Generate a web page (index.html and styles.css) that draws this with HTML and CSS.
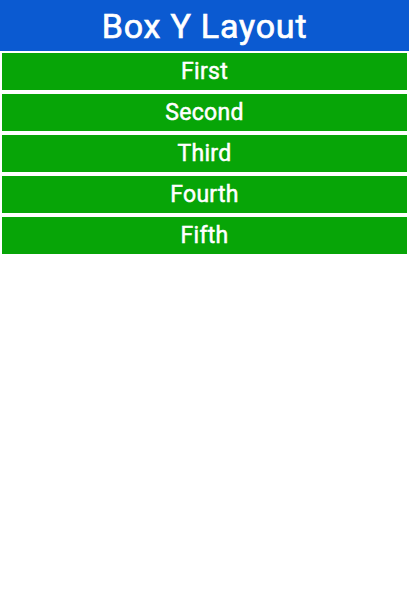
FILE: index.html
```html
<!DOCTYPE html>
<html>
<head>
<meta charset="utf-8">
<link rel="stylesheet" href="styles.css">
</head>
<body>
<div class="header">Box Y Layout</div>
<div class="list">
  <div class="item">First</div>
  <div class="item">Second</div>
  <div class="item">Third</div>
  <div class="item">Fourth</div>
  <div class="item">Fifth</div>
</div>
</body>
</html>
```
FILE: styles.css
```css
html, body {
  margin: 0;
  padding: 0;
  background: #ffffff;
  font-family: Roboto, "Noto Sans", sans-serif;
}
.header {
  height: 51px;
  background: #0b5ad1;
  color: #ffffff;
  font-size: 34px;
  font-weight: 400;
  letter-spacing: 0.8px;
  -webkit-text-stroke: 0.7px #ffffff;
  display: flex;
  align-items: center;
  justify-content: center;
}
.list {
  display: flex;
  flex-direction: column;
  padding: 0 2px;
}
.item {
  height: 37px;
  margin: 2px 0;
  background: #07a507;
  color: #ffffff;
  font-size: 23px;
  font-weight: 400;
  letter-spacing: 0.3px;
  -webkit-text-stroke: 0.5px #ffffff;
  display: flex;
  align-items: center;
  justify-content: center;
}
```
